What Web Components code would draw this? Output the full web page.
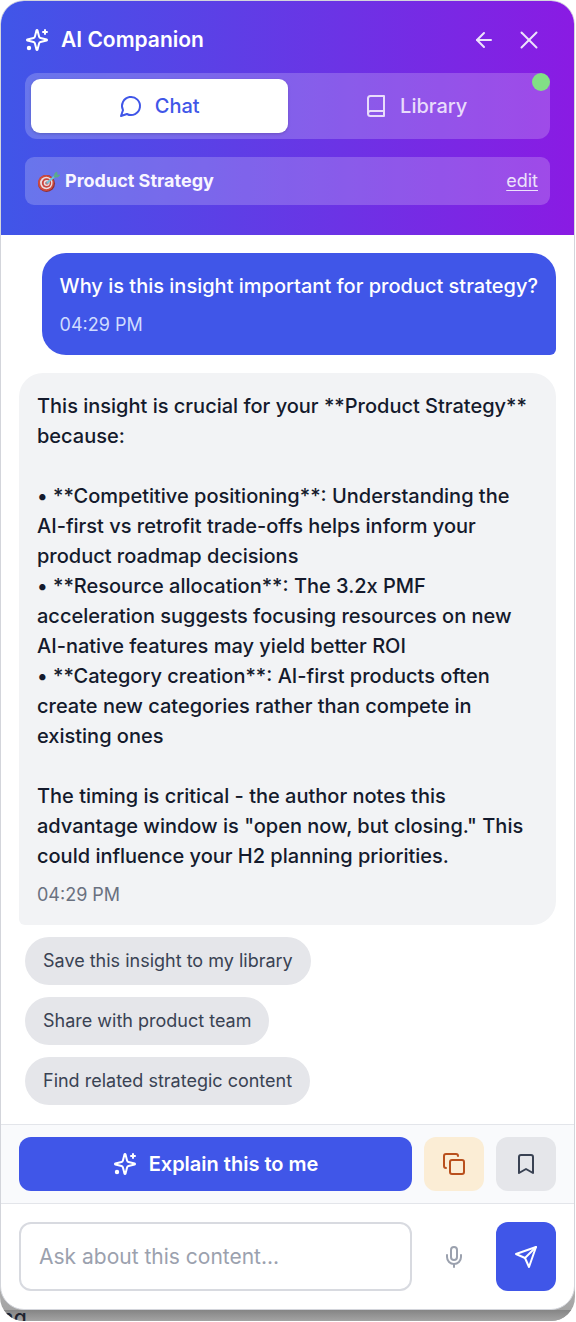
<!DOCTYPE html>
<html lang="en">
<head>
<meta charset="utf-8">
<meta name="viewport" content="width=device-width, initial-scale=1">
<title>AI Companion</title>
<style>
  body {
    margin: 0 1px 0 0;
    background: #fff;
    color: #141a2c;
    font: 400 21px/30px Inter, "Liberation Sans", sans-serif;
    --primary: #4056e8;
    --accent: #8a1be3;
    --line: #e3e5ea;
  }
</style>
</head>
<body>

<companion-page>
  <companion-panel>
    <companion-header slot="header" topic="Product Strategy">AI Companion</companion-header>

    <chat-message from="user" time="04:29 PM">Why is this insight important for product strategy?</chat-message>
    <chat-message from="assistant" time="04:29 PM">This insight is crucial for your **Product Strategy** because:

• **Competitive positioning**: Understanding the AI-first vs retrofit trade-offs helps inform your product roadmap decisions
• **Resource allocation**: The 3.2x PMF acceleration suggests focusing resources on new AI-native features may yield better ROI
• **Category creation**: AI-first products often create new categories rather than compete in existing ones

The timing is critical - the author notes this advantage window is "open now, but closing." This could influence your H2 planning priorities.</chat-message>

    <suggestion-list slot="suggestions">
      <suggestion-chip>Save this insight to my library</suggestion-chip>
      <suggestion-chip>Share with product team</suggestion-chip>
      <suggestion-chip>Find related strategic content</suggestion-chip>
    </suggestion-list>

    <action-bar slot="footer">Explain this to me</action-bar>
    <chat-composer slot="footer" placeholder="Ask about this content..."></chat-composer>
  </companion-panel>
  <span slot="behind">ng</span>
</companion-page>

<template id="tmp-page">
  <style>
    :host {
      display: flex;
      flex-direction: column;
      box-sizing: border-box;
      min-height: 100vh;
      padding-bottom: 1px;
    }
    .stage {
      flex: 1;
      display: flex;
      flex-direction: column;
      overflow: hidden;
      border-radius: 24px;
      background: linear-gradient(#b4b4b4, #9d9d9d) bottom / 100% 40px no-repeat;
    }
    .behind {
      height: 11px;
      overflow: hidden;
      padding-left: 1px;
      background: linear-gradient(#858585, #a3a3a3);
      color: #1f2430;
      font-weight: 500;
      line-height: 16px;
    }
  </style>
  <div class="stage">
    <slot></slot>
    <div class="behind"><slot name="behind"></slot></div>
  </div>
</template>

<template id="tmp-panel">
  <style>
    :host {
      flex: 1;
      display: flex;
      flex-direction: column;
      overflow: hidden;
      border: 1px solid #d3d5db;
      border-radius: 24px;
      background: #fff;
    }
    main {
      flex: 1;
      display: flex;
      flex-direction: column;
      gap: 12px;
      padding: 18px;
    }
    .log {
      display: flex;
      flex-direction: column;
      gap: 18px;
    }
  </style>
  <slot name="header"></slot>
  <main>
    <div class="log"><slot></slot></div>
    <slot name="suggestions"></slot>
  </main>
  <slot name="footer"></slot>
</template>

<template id="tmp-header">
  <style>
    :host {
      display: flex;
      flex-direction: column;
      gap: 18px;
      padding: 24px 24px 30px;
      background: linear-gradient(to right, var(--primary), var(--accent));
      color: #fff;
    }
    button {
      font: inherit;
      color: inherit;
      margin: 0;
      padding: 0;
      border: 0;
      background: none;
      cursor: pointer;
    }
    .title {
      display: flex;
      align-items: center;
      gap: 6px;
      height: 30px;
    }
    h1 {
      flex: 1;
      display: flex;
      align-items: center;
      gap: 12px;
      margin: 0;
      font-size: 21px;
      font-weight: 600;
    }
    .title button {
      display: flex;
      padding: 0 6px;
      color: #ece2fb;
    }
    .tabs {
      position: relative;
      display: flex;
      padding: 6px;
      border-radius: 12px;
      background: #ffffff33;
    }
    .tabs button {
      flex: 1;
      display: flex;
      align-items: center;
      justify-content: center;
      gap: 12px;
      height: 54px;
      border-radius: 9px;
      font-size: 20px;
      font-weight: 500;
      color: #e8dcfb;
    }
    .tabs button[aria-selected=true] {
      background: #fff;
      color: var(--primary);
      box-shadow: 0 1px 3px #0000002e;
    }
    .dot {
      position: absolute;
      top: 0;
      right: 0;
      width: 18px;
      height: 18px;
      border-radius: 50%;
      background: #82df85;
    }
    .topic {
      display: flex;
      align-items: center;
      gap: 4px;
      height: 48px;
      padding: 0 12px;
      border-radius: 9px;
      background: #ffffff33;
      font-size: 18px;
      line-height: 24px;
    }
    .topic strong {
      flex: 1;
      font-weight: 700;
      color: #f8f6ff;
    }
    .topic a {
      color: #ece2fb;
      text-decoration: underline;
      text-underline-offset: 3px;
    }
  </style>
  <div class="title">
    <h1><ui-icon name="sparkles"></ui-icon><slot></slot></h1>
    <button type="button" aria-label="Back"><ui-icon name="arrow-left"></ui-icon></button>
    <button type="button" aria-label="Close"><ui-icon name="x" size="30"></ui-icon></button>
  </div>
  <div class="tabs" role="tablist">
    <button type="button" role="tab" aria-selected="true"><ui-icon name="message"></ui-icon>Chat</button>
    <button type="button" role="tab" aria-selected="false"><ui-icon name="book"></ui-icon>Library</button>
    <span class="dot"></span>
  </div>
  <div class="topic">
    <ui-icon name="target"></ui-icon>
    <strong></strong>
    <a href="#edit">edit</a>
  </div>
</template>

<template id="tmp-message">
  <style>
    :host {
      display: block;
      padding: 18px;
      border-radius: 24px 24px 24px 6px;
      background: #f2f3f5;
    }
    :host([from=user]) {
      align-self: flex-end;
      border-radius: 24px 24px 6px 24px;
      background: var(--primary);
      color: #fff;
    }
    .text {
      font-size: 20px;
      font-weight: 450;
      white-space: pre-line;
    }
    :host([from=user]) .text {
      font-weight: 550;
    }
    time {
      display: block;
      margin-top: 12px;
      font-size: 18px;
      line-height: 24px;
      color: #6a7180;
    }
    :host([from=user]) time {
      color: #cfdcff;
    }
  </style>
  <div class="text"><slot></slot></div>
  <time></time>
</template>

<template id="tmp-suggestions">
  <style>
    :host {
      display: flex;
      flex-direction: column;
      align-items: flex-start;
      gap: 12px;
      padding-left: 6px;
    }
  </style>
  <slot></slot>
</template>

<template id="tmp-chip">
  <style>
    :host {
      display: block;
    }
    button {
      display: block;
      height: 48px;
      margin: 0;
      padding: 0 18px;
      border: 0;
      border-radius: 24px;
      background: #e5e6ea;
      color: #394253;
      font: inherit;
      font-size: 18px;
      line-height: 24px;
      cursor: pointer;
    }
  </style>
  <button type="button"><slot></slot></button>
</template>

<template id="tmp-actions">
  <style>
    :host {
      display: flex;
      gap: 12px;
      padding: 12px 18px;
      border: solid var(--line);
      border-width: 1px 0;
      background: #f9fafc;
    }
    button {
      display: flex;
      align-items: center;
      justify-content: center;
      gap: 12px;
      width: 60px;
      height: 54px;
      margin: 0;
      padding: 0;
      border: 0;
      border-radius: 12px;
      font: inherit;
      cursor: pointer;
    }
    .explain {
      flex: 1;
      background: var(--primary);
      color: #fff;
      font-size: 20px;
      font-weight: 600;
    }
    .copy {
      background: #fbedd5;
      color: #b9501d;
    }
    .save {
      background: #e5e6ea;
      color: #394253;
    }
  </style>
  <button type="button" class="explain"><ui-icon name="sparkles"></ui-icon><slot></slot></button>
  <button type="button" class="copy" aria-label="Copy"><ui-icon name="copy"></ui-icon></button>
  <button type="button" class="save" aria-label="Bookmark"><ui-icon name="bookmark"></ui-icon></button>
</template>

<template id="tmp-composer">
  <style>
    :host {
      display: block;
      padding: 18px;
    }
    form {
      display: flex;
      gap: 12px;
      margin: 0;
    }
    input {
      flex: 1;
      min-width: 0;
      box-sizing: border-box;
      height: 69px;
      margin: 0;
      padding: 0 18px;
      border: 2px solid #d8dae0;
      border-radius: 12px;
      background: #fff;
      color: inherit;
      font: inherit;
    }
    input::placeholder {
      color: #9ba1ae;
      opacity: 1;
    }
    button {
      display: flex;
      align-items: center;
      justify-content: center;
      width: 60px;
      margin: 0;
      padding: 0;
      border: 0;
      border-radius: 12px;
      background: none;
      color: #9ba1ae;
      cursor: pointer;
    }
    .send {
      background: var(--primary);
      color: #fff;
    }
  </style>
  <form>
    <input type="text" aria-label="Message">
    <button type="button" aria-label="Dictate"><ui-icon name="mic"></ui-icon></button>
    <button type="submit" class="send" aria-label="Send"><ui-icon name="send"></ui-icon></button>
  </form>
</template>

<script>
(function() {
  let icons = {
    'sparkles': '<path d="M9.937 15.5A2 2 0 0 0 8.5 14.063l-6.135-1.582a.5.5 0 0 1 0-.962L8.5 9.936A2 2 0 0 0 9.937 8.5l1.582-6.135a.5.5 0 0 1 .963 0L14.063 8.5A2 2 0 0 0 15.5 9.937l6.135 1.581a.5.5 0 0 1 0 .964L15.5 14.063a2 2 0 0 0-1.437 1.437l-1.582 6.135a.5.5 0 0 1-.963 0z"/><path d="M20 2v4"/><path d="M22 4h-4"/><circle cx="4" cy="20" r="1.2" fill="currentColor"/>',
    'arrow-left': '<path d="m12 19-7-7 7-7"/><path d="M19 12H5"/>',
    'x': '<path d="M18 6 6 18"/><path d="m6 6 12 12"/>',
    'message': '<path d="M7.9 20A9 9 0 1 0 4 16.1L2 22Z"/>',
    'book': '<path d="M4 19.5v-15A2.5 2.5 0 0 1 6.5 2H20v20H6.5a2.5 2.5 0 0 1 0-5H20"/>',
    'copy': '<rect x="8" y="8" width="14" height="14" rx="2"/><path d="M4 16c-1.1 0-2-.9-2-2V4c0-1.1.9-2 2-2h10c1.1 0 2 .9 2 2"/>',
    'bookmark': '<path d="m19 21-7-4-7 4V5a2 2 0 0 1 2-2h10a2 2 0 0 1 2 2z"/>',
    'mic': '<rect x="9" y="2" width="6" height="13" rx="3"/><path d="M19 10v2a7 7 0 0 1-14 0v-2"/><path d="M12 19v3"/>',
    'send': '<path d="m22 2-7 20-4-9-9-4Z"/><path d="M22 2 11 13"/>',
    'target': '<g stroke="none"><ellipse cx="9.5" cy="14.5" rx="8.5" ry="8.5" fill="#8e2f35"/><circle cx="9" cy="14" r="8" fill="#cf4a3e"/><circle cx="9.3" cy="14" r="6.2" fill="#eadfe2"/><circle cx="9.5" cy="14" r="4.7" fill="#c9463f"/><circle cx="9.7" cy="14" r="3" fill="#eadfe2"/><circle cx="9.9" cy="14" r="1.6" fill="#b93a38"/></g><path d="M10 14 18 7" stroke="#6fc3dc" stroke-width="1.8"/><path d="m17 8 1-4 2-1v3h3l-2 2z" fill="#5ca98c" stroke="#5ca98c" stroke-width=".6"/>'
  };

  class UiIcon extends HTMLElement {
    connectedCallback() {
      let size = this.getAttribute('size') || 24;
      // strokes stay 2px whatever the icon size is
      let stroke = 48 / size;
      this.attachShadow({mode: 'open'}).innerHTML = `
        <style>
          :host { display: inline-flex; flex: none; }
          svg { display: block; fill: none; stroke: currentColor; stroke-linecap: round; stroke-linejoin: round; }
        </style>
        <svg width="${size}" height="${size}" viewBox="0 0 24 24" stroke-width="${stroke}" aria-hidden="true">
          ${icons[this.getAttribute('name')]}
        </svg>`;
    }
  }
  customElements.define('ui-icon', UiIcon);

  // element whose shadow root is cloned from a template
  function define(name, templateId, setup) {
    customElements.define(name, class extends HTMLElement {
      constructor() {
        super();
        let fragment = document.querySelector(templateId).content.cloneNode(true);
        this.attachShadow({mode: 'open'}).append(fragment);
      }
      connectedCallback() {
        if (setup) {
          setup(this, selector => this.shadowRoot.querySelector(selector));
        }
      }
    });
  }

  define('companion-page', '#tmp-page');
  define('companion-panel', '#tmp-panel');

  define('companion-header', '#tmp-header', (node, $) => {
    $('strong').textContent = node.getAttribute('topic');
    let tabs = node.shadowRoot.querySelectorAll('[role=tab]');
    for (let tab of tabs) {
      tab.addEventListener('click', () => {
        tabs.forEach(x => x.setAttribute('aria-selected', x === tab));
      });
    }
  });

  define('chat-message', '#tmp-message', (node, $) => {
    $('time').textContent = node.getAttribute('time');
  });

  define('suggestion-list', '#tmp-suggestions');
  define('suggestion-chip', '#tmp-chip');
  define('action-bar', '#tmp-actions');

  define('chat-composer', '#tmp-composer', (node, $) => {
    $('input').placeholder = node.getAttribute('placeholder');
    $('form').addEventListener('submit', e => e.preventDefault());
  });
})();
</script>
</body>
</html>
